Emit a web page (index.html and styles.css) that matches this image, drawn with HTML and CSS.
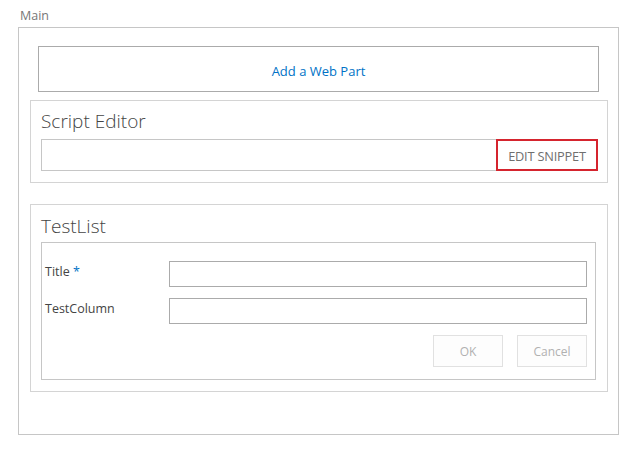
FILE: index.html
```html
<!DOCTYPE html>
<html>
<head>
<meta charset="utf-8">
<link rel="stylesheet" href="styles.css">
</head>
<body>
<div class="page">
  <div class="zone-label">Main</div>
  <div class="zone">
    <div class="add-part"><a class="add-link">Add a Web Part</a></div>
    <div class="webpart script-part">
      <div class="wp-title">Script Editor</div>
      <div class="snippet-box">
        <div class="snippet-btn">EDIT SNIPPET</div>
      </div>
    </div>
    <div class="webpart list-part">
      <div class="wp-title">TestList</div>
      <div class="form-box">
        <div class="form-row">
          <div class="form-label">Title <span class="req">*</span></div>
          <div class="form-input"></div>
        </div>
        <div class="form-row">
          <div class="form-label">TestColumn</div>
          <div class="form-input"></div>
        </div>
        <div class="form-actions">
          <div class="btn">OK</div>
          <div class="btn">Cancel</div>
        </div>
      </div>
    </div>
  </div>
</div>
</body>
</html>
```

FILE: styles.css
```css
html, body {
  margin: 0;
  padding: 0;
  background: #ffffff;
}
body {
  font-family: "Open Sans", "Noto Sans", sans-serif;
  color: #444444;
}
.page {
  padding: 8px 0 0 18px;
}
.zone-label {
  font-size: 12.5px;
  color: #777777;
  line-height: 16px;
  height: 19px;
  padding-left: 2px;
}
.zone {
  box-sizing: border-box;
  width: 601px;
  height: 408px;
  border: 1px solid #c6c6c6;
  padding: 18px 10px 0 11px;
}
.add-part {
  box-sizing: border-box;
  margin: 0 9px 0 8px;
  height: 46px;
  border: 1px solid #ababab;
  display: flex;
  align-items: center;
  justify-content: center;
}
.add-link {
  font-size: 13px;
  color: #0072c6;
  padding-top: 4px;
}
.webpart {
  box-sizing: border-box;
  border: 1px solid #d4d4d4;
  padding: 0 10px;
}
.script-part {
  margin-top: 8px;
  height: 83px;
}
.list-part {
  margin-top: 21px;
  height: 188px;
}
.wp-title {
  font-size: 19px;
  font-weight: 300;
  color: #444444;
  line-height: 24px;
  padding-top: 8px;
  height: 30px;
}
.snippet-box {
  box-sizing: border-box;
  height: 32px;
  border: 1px solid #c6c6c6;
  display: flex;
  justify-content: flex-end;
  margin-right: -1px;
}
.snippet-btn {
  box-sizing: border-box;
  margin: -1px -1px -1px 0;
  height: 32px;
  width: 102px;
  border: 2px solid #d5242e;
  color: #6f6f6f;
  font-size: 12.8px;
  letter-spacing: -0.2px;
  display: flex;
  align-items: center;
  justify-content: center;
  padding-top: 2px;
}
.list-part .wp-title {
  padding-top: 9px;
  height: 28px;
}
.form-box {
  box-sizing: border-box;
  height: 138px;
  border: 1px solid #c6c6c6;
  margin-right: 1px;
  padding: 18px 8px 0 3px;
}
.form-row {
  display: flex;
  align-items: center;
  height: 26px;
  margin-bottom: 11px;
}
.form-label {
  width: 124px;
  font-size: 12.5px;
  color: #444444;
  padding-bottom: 6px;
}
.req {
  color: #0072c6;
}
.form-input {
  box-sizing: border-box;
  flex: 1;
  height: 26px;
  border: 1px solid #ababab;
  background: #ffffff;
}
.form-actions {
  display: flex;
  justify-content: flex-end;
  gap: 14px;
  margin-top: 1px;
}
.btn {
  box-sizing: border-box;
  width: 70px;
  height: 32px;
  border: 1px solid #e1e1e1;
  background: #fdfdfd;
  color: #b1b1b1;
  font-size: 12px;
  display: flex;
  align-items: center;
  justify-content: center;
}
```
